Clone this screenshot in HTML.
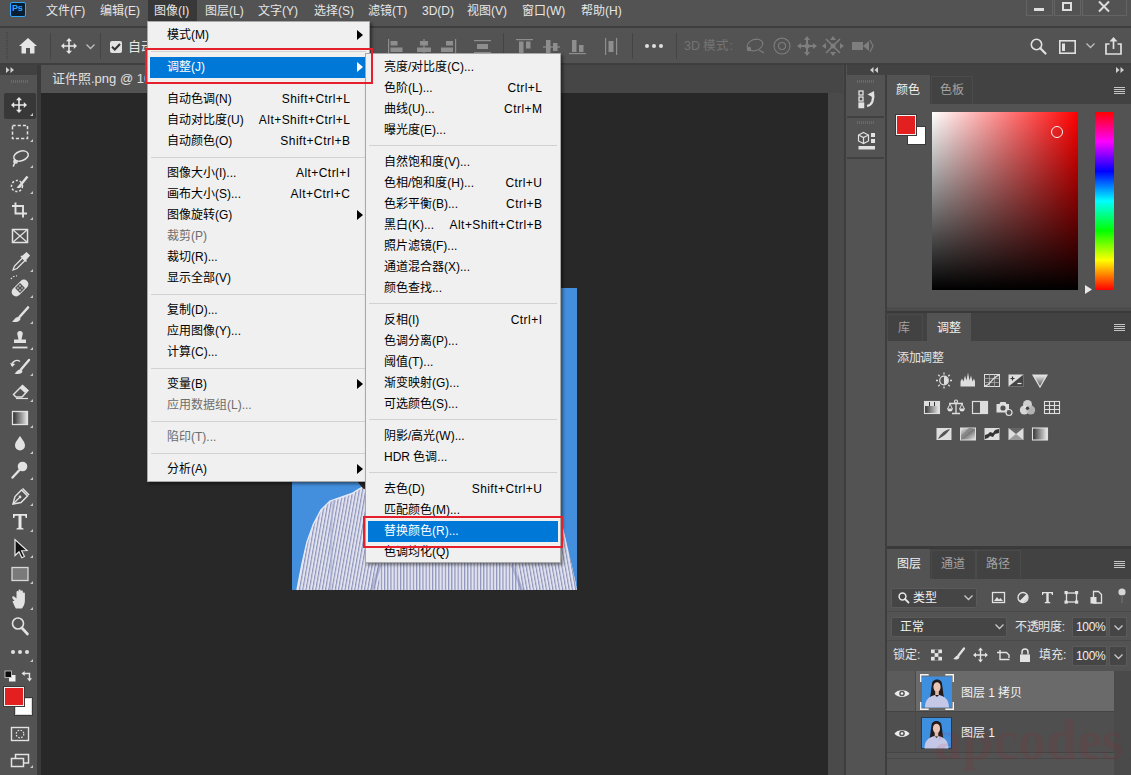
<!DOCTYPE html>
<html lang="zh-CN">
<head>
<meta charset="utf-8">
<title>Photoshop</title>
<style>
html,body{margin:0;padding:0}
body{width:1131px;height:775px;position:relative;overflow:hidden;background:#535353;font-family:"Liberation Sans",sans-serif;font-size:12px;color:#dcdcdc;line-height:1}
.a{position:absolute}
.t{position:absolute;white-space:nowrap}
svg{position:absolute;overflow:visible}
/* menubar */
#menubar{left:0;top:0;width:1131px;height:26px;background:#535353}
.mi{position:absolute;top:0;height:22px;line-height:22px;font-size:12px;color:#e6e6e6;white-space:nowrap}
/* dropdown menus */
.menu{position:absolute;background:#f0f0f0;border:1px solid #a8a8a8;box-sizing:border-box;color:#000;box-shadow:2px 2px 3px rgba(0,0,0,.45)}
.menu .it{position:absolute;left:2px;right:2px;height:21px;line-height:21px;font-size:12px;white-space:nowrap}
.menu .it .l{position:absolute;left:16px;top:0}
.menu .it .r{position:absolute;right:16px;top:0;letter-spacing:0.45px;margin-right:-0.45px}
.menu .it.dis{color:#6d6d6d}
.menu .it.hl{background:#0078d7;color:#fff}
.menu .sep{position:absolute;left:3px;right:3px;height:1px;background:#d2d2d2}
.menu .arr{position:absolute;right:4px;top:5px;width:0;height:0;border-left:6px solid #000;border-top:5.5px solid transparent;border-bottom:5.5px solid transparent}
.menu .hl .arr{border-left-color:#fff}
.redbox{position:absolute;border:2px solid #e3202c;box-sizing:border-box}
</style>
</head>
<body>
<!-- ===== BACKGROUND STRUCTURE ===== -->
<div class="a" id="menubar"></div>
<div class="a" style="left:0;top:26px;width:1131px;height:2px;background:#3e3e3e"></div>
<div class="a" id="optbar" style="left:0;top:28px;width:1131px;height:35px;background:#535353"></div>
<div class="a" style="left:0;top:63px;width:1131px;height:2px;background:#3e3e3e"></div>
<!-- left toolbar -->
<div class="a" id="toolbar" style="left:0;top:65px;width:37px;height:710px;background:#535353"></div>
<div class="a" style="left:0;top:65px;width:37px;height:10px;background:#414141"></div>
<div class="a" style="left:37px;top:65px;width:4px;height:710px;background:#3a3a3a"></div>
<!-- document area -->
<div class="a" id="tabbar" style="left:41px;top:65px;width:802px;height:28px;background:#464646"></div>
<div class="a" id="canvas" style="left:41px;top:93px;width:787px;height:682px;background:#282828"></div>
<div class="a" style="left:828px;top:93px;width:15px;height:682px;background:#4a4a4a"></div>
<div class="a" style="left:843px;top:65px;width:1px;height:710px;background:#4a4a4a"></div><div class="a" style="left:844px;top:65px;width:2.500px;height:710px;background:#3d3d3d"></div>
<!-- right dock -->
<div class="a" id="dock" style="left:846px;top:65px;width:284px;height:710px;background:#535353"></div>

<!-- ===== PHOTO ===== -->
<svg style="left:292px;top:288px" width="285" height="302" viewBox="292 288 285 302">
 <defs>
  <pattern id="stripe" width="3.2" height="10" patternUnits="userSpaceOnUse" patternTransform="rotate(10)">
   <rect width="3.2" height="10" fill="#e2e3ee"/><rect width="1.15" height="10" fill="#8c93bb"/>
  </pattern>
  <pattern id="stripe2" width="3.2" height="10" patternUnits="userSpaceOnUse" patternTransform="rotate(-10)">
   <rect width="3.2" height="10" fill="#e2e3ee"/><rect width="1.15" height="10" fill="#8c93bb"/>
  </pattern>
  <pattern id="stripe3" width="3.2" height="10" patternUnits="userSpaceOnUse">
   <rect width="3.2" height="10" fill="#e2e3ee"/><rect width="1.15" height="10" fill="#8c93bb"/>
  </pattern>
 </defs>
 <rect x="292" y="288" width="285" height="302" fill="#448fdd"/>
 <path d="M297 590 L302 564 L307 542 L313.500 524 L321 510 L330 501 L342 497 L352 493.500 L359 489 L364 486.500 L372 476 L400 470 L520 470 L548 505 L563 528 L567 545 L571 562 L575 580 L577 590 Z" fill="url(#stripe3)"/>
 <path d="M297 590 L302 564 L307 542 L313.500 524 L321 510 L330 501 L342 497 L352 493.500 L359 489 L364 486.500 L372 476 L380 590 Z" fill="url(#stripe)"/>
 <path d="M505 470 L520 470 L548 505 L563 528 L567 545 L571 562 L575 580 L577 590 L520 590 Z" fill="url(#stripe2)"/>
 <path d="M297 590 L302 564 L307 542 L313.500 524 L321 510 L330 501 L342 497 L352 493.500 L359 489 L364 486.500" stroke="#e6eaf8" stroke-width="1.400" fill="none"/>
 <path d="M334 500 C328 530 334 560 330 590" stroke="#a9afd4" stroke-width="2" fill="none" opacity="0.600"/>
 <path d="M512 565 L522 590 M380 565 L372 590" stroke="#8088b6" stroke-width="3" fill="none" opacity="0.450"/>
 <path d="M357 481 L368 481 L368 490 L363 488.500 Z" fill="#2a2320"/>
</svg>

<!-- ===== MENU BAR ===== -->
<div class="a" style="left:10px;top:2px;width:16px;height:15px;background:#0a1e33;border:1px solid #31a8ff;box-sizing:border-box;border-radius:2px"></div>
<div class="t" style="left:12px;top:4px;font-size:9px;font-weight:bold;color:#31a8ff;letter-spacing:-0.3px">Ps</div>
<div class="a" style="left:148px;top:0;width:49px;height:22px;background:#383838"></div>
<div class="a" id="menubar2" style="left:0;top:0;width:700px;height:22px">
<span class="mi" style="left:46px">文件(F)</span>
<span class="mi" style="left:100px">编辑(E)</span>
<span class="mi" style="left:154px">图像(I)</span>
<span class="mi" style="left:205px">图层(L)</span>
<span class="mi" style="left:258px">文字(Y)</span>
<span class="mi" style="left:314px">选择(S)</span>
<span class="mi" style="left:368px">滤镜(T)</span>
<span class="mi" style="left:422px">3D(D)</span>
<span class="mi" style="left:467px">视图(V)</span>
<span class="mi" style="left:522px">窗口(W)</span>
<span class="mi" style="left:581px">帮助(H)</span>
</div>
<!-- window controls -->
<div class="a" style="left:1026px;top:-1px;width:27px;height:17px;border:1px solid #646464;box-sizing:border-box"></div>
<div class="a" style="left:1054px;top:-1px;width:27px;height:17px;border:1px solid #646464;box-sizing:border-box"></div>
<div class="a" style="left:1082px;top:-1px;width:45px;height:17px;border:1px solid #646464;box-sizing:border-box"></div>
<div class="a" style="left:1034px;top:8px;width:10px;height:3px;background:#dedede"></div>
<div class="a" style="left:1062px;top:2px;width:10px;height:9px;border:2px solid #dedede;box-sizing:border-box"></div>
<svg style="left:1098px;top:1px" width="12" height="11" viewBox="0 0 12 11"><path d="M1 0.5 L11 10.5 M11 0.5 L1 10.5" stroke="#dedede" stroke-width="2" fill="none"/></svg>

<!-- ===== OPTIONS BAR ===== -->
<div class="a" style="left:6px;top:32px;width:2px;height:27px;background:repeating-linear-gradient(180deg,#474747 0 1px,transparent 1px 2px)"></div>
<!-- home -->
<svg style="left:19px;top:38px" width="18" height="16" viewBox="0 0 18 16"><path d="M9 0 L0 8 L2.5 8 L2.5 15.5 L7 15.5 L7 10 L11 10 L11 15.5 L15.5 15.5 L15.5 8 L18 8 Z" fill="#e6e6e6"/></svg>
<div class="a" style="left:50px;top:33px;width:1px;height:26px;background:#444"></div>
<!-- move tool -->
<svg style="left:61px;top:38px" width="16" height="16" viewBox="0 0 16 16"><path d="M8 0 L11 3.2 L8.8 3.2 L8.8 7.2 L12.8 7.2 L12.8 5 L16 8 L12.8 11 L12.8 8.8 L8.8 8.8 L8.8 12.8 L11 12.8 L8 16 L5 12.8 L7.2 12.8 L7.2 8.8 L3.2 8.8 L3.2 11 L0 8 L3.2 5 L3.2 7.2 L7.2 7.2 L7.2 3.2 L5 3.2 Z" fill="#e6e6e6"/></svg>
<svg style="left:86px;top:44px" width="9" height="6" viewBox="0 0 9 6"><path d="M0.5 0.5 L4.5 4.5 L8.5 0.5" stroke="#bdbdbd" stroke-width="1.3" fill="none"/></svg>
<div class="a" style="left:100px;top:33px;width:1px;height:26px;background:#444"></div>
<!-- checkbox -->
<div class="a" style="left:110px;top:41px;width:12px;height:12px;background:#e2e2e2;border-radius:2px"></div>
<svg style="left:111px;top:43px" width="10" height="8" viewBox="0 0 10 8"><path d="M1 3.8 L3.8 6.5 L9 1" stroke="#333" stroke-width="2" fill="none"/></svg>
<div class="t" style="left:128px;top:40px;font-size:13px;color:#e6e6e6">自动选择:</div>
<!-- align icons (dim) -->
<svg style="left:388px;top:38px" width="250" height="18" viewBox="0 0 250 18" fill="#8e8e8e">
 <!-- align left -->
 <rect x="0" y="1" width="1.2" height="15"/><rect x="2.5" y="3" width="7" height="4.5"/><rect x="2.5" y="9.5" width="12" height="4.5"/>
 <!-- align center h -->
 <rect x="35.4" y="1" width="1.2" height="15"/><rect x="32" y="3" width="8" height="4.5"/><rect x="29" y="9.500" width="14" height="4.5"/>
 <!-- align right -->
 <rect x="67" y="1" width="1.2" height="15"/><rect x="58" y="3" width="7" height="4.5"/><rect x="53" y="9.5" width="12" height="4.5"/>
 <!-- distribute -->
 <rect x="86" y="2" width="17" height="1.2"/><rect x="86" y="14" width="17" height="1.2"/><rect x="89" y="6" width="11" height="5"/>
 <!-- sep -->
 <rect x="115" y="-5" width="1" height="26" fill="#444"/>
 <!-- align top -->
 <rect x="128" y="1" width="17" height="1.2"/><rect x="131" y="3.5" width="4.5" height="12"/><rect x="138" y="3.5" width="4.500" height="7"/>
 <!-- align middle -->
 <rect x="155" y="8.4" width="17" height="1.2"/><rect x="158" y="2" width="4.5" height="14"/><rect x="165" y="5" width="4.5" height="8"/>
 <!-- align bottom -->
 <rect x="181" y="15" width="17" height="1.2"/><rect x="184" y="2" width="4.5" height="12"/><rect x="191" y="7" width="4.5" height="7"/>
 <!-- distribute v -->
 <rect x="217" y="0" width="1.2" height="17"/><rect x="228" y="0" width="1.2" height="17"/><rect x="220.500" y="3" width="5" height="11"/>
 <rect x="244" y="-5" width="1" height="26" fill="#444"/>
</svg>
<div class="a" style="left:645px;top:44px;width:4px;height:4px;border-radius:2px;background:#e0e0e0"></div>
<div class="a" style="left:652px;top:44px;width:4px;height:4px;border-radius:2px;background:#e0e0e0"></div>
<div class="a" style="left:659px;top:44px;width:4px;height:4px;border-radius:2px;background:#e0e0e0"></div>
<div class="a" style="left:676px;top:33px;width:1px;height:26px;background:#444"></div>
<div class="t" style="left:684px;top:40px;font-size:12.500px;color:#747474">3D 模式:</div>
<!-- 3D icons dim -->
<svg style="left:744px;top:36px" width="130" height="20" viewBox="0 0 130 20" fill="none" stroke="#7e7e7e" stroke-width="1.1">
 <ellipse cx="11" cy="9" rx="8" ry="5.5" transform="rotate(-20 11 9)"/><circle cx="5" cy="13" r="2.2" fill="#7e7e7e" stroke="none"/><path d="M15 14 l5 3"/>
 <circle cx="38" cy="10" r="8"/><circle cx="38" cy="10" r="3.5"/><path d="M33 4 a8 8 0 0 1 10 0"/>
 <path d="M63 1 L63 19 M54 10 L72 10" stroke-width="2"/><path d="M63 0 l-3 4 h6 z M63 20 l-3 -4 h6 z M53 10 l4 -3 v6 z M73 10 l-4 -3 v6 z" fill="#7e7e7e" stroke="none"/><circle cx="63" cy="10" r="2.500" fill="#7e7e7e" stroke="none"/>
 <path d="M82 3 L96 17 M96 3 L82 17" stroke-width="1.6"/><path d="M89 0 l-3 4 h6 z M89 20 l-3 -4 h6 z M78 10 l4 -3 v6 z M100 10 l-4 -3 v6 z" fill="#7e7e7e" stroke="none"/><circle cx="89" cy="10" r="2.5" fill="#7e7e7e" stroke="none"/>
 <rect x="108" y="6" width="11" height="8" fill="#7e7e7e" stroke="none"/><path d="M119 10 l6 -5 v10 z" fill="#7e7e7e" stroke="none"/><path d="M126 4 l3 6 l-3 6" />
</svg>
<!-- search -->
<svg style="left:1030px;top:38px" width="17" height="17" viewBox="0 0 17 17"><circle cx="6.5" cy="6.5" r="5.2" stroke="#e0e0e0" stroke-width="1.6" fill="none"/><path d="M10.300 10.300 L15.500 15.500" stroke="#e0e0e0" stroke-width="2.2" stroke-linecap="round"/></svg>
<!-- workspace -->
<svg style="left:1059px;top:40px" width="17" height="14" viewBox="0 0 17 14"><rect x="0.8" y="0.8" width="15.4" height="12.4" stroke="#e0e0e0" stroke-width="1.6" fill="none"/><rect x="3" y="3.500" width="3" height="7.500" fill="#e0e0e0"/></svg>
<svg style="left:1086px;top:43px" width="9" height="6" viewBox="0 0 9 6"><path d="M0.5 0.5 L4.5 4.5 L8.5 0.5" stroke="#bdbdbd" stroke-width="1.3" fill="none"/></svg>
<!-- share -->
<svg style="left:1105px;top:37px" width="17" height="18" viewBox="0 0 17 18"><path d="M4.5 7 L1 7 L1 17 L16 17 L16 7 L12.500 7" stroke="#e0e0e0" stroke-width="1.7" fill="none"/><path d="M8.5 12 L8.5 3" stroke="#e0e0e0" stroke-width="1.7"/><path d="M8.5 0 L4.5 4.500 L12.5 4.500 Z" fill="#e0e0e0"/></svg>

<!-- ===== DOC TAB ===== -->
<div class="a" style="left:41px;top:65px;width:330px;height:28px;background:#535353"></div>
<div class="t" style="left:52px;top:72px;font-size:13px;color:#e0e0e0">证件照.png @ 100%(图层 1 拷贝, RGB/8#) *</div>
<svg style="left:6px;top:67px" width="9" height="6" viewBox="0 0 9 6"><path d="M0 0 L3.5 3 L0 6 Z M4.500 0 L8 3 L4.5 6 Z" fill="#cfcfcf"/></svg>

<div class="a" style="left:11px;top:80px;width:17px;height:3px;background:repeating-linear-gradient(90deg,#6a6a6a 0 1px,transparent 1px 2px)"></div>

<div class="menu" id="m1" style="left:147px;top:21px;width:223px;height:461px">
<div class="it" style="top:3px"><span class="l" style="left:17px">模式(M)</span><span class="arr"></span></div>
<div class="sep" style="top:28.5px"></div>
<div class="it hl" style="top:35px"><span class="l" style="left:17px">调整(J)</span><span class="arr"></span></div>
<div class="sep" style="top:60.5px"></div>
<div class="it" style="top:67px"><span class="l" style="left:17px">自动色调(N)</span><span class="r" style="right:17px">Shift+Ctrl+L</span></div>
<div class="it" style="top:88px"><span class="l" style="left:17px">自动对比度(U)</span><span class="r" style="right:17px">Alt+Shift+Ctrl+L</span></div>
<div class="it" style="top:109px"><span class="l" style="left:17px">自动颜色(O)</span><span class="r" style="right:17px">Shift+Ctrl+B</span></div>
<div class="sep" style="top:134.5px"></div>
<div class="it" style="top:141px"><span class="l" style="left:17px">图像大小(I)...</span><span class="r" style="right:17px">Alt+Ctrl+I</span></div>
<div class="it" style="top:162px"><span class="l" style="left:17px">画布大小(S)...</span><span class="r" style="right:17px">Alt+Ctrl+C</span></div>
<div class="it" style="top:183px"><span class="l" style="left:17px">图像旋转(G)</span><span class="arr"></span></div>
<div class="it dis" style="top:204px"><span class="l" style="left:17px">裁剪(P)</span></div>
<div class="it" style="top:225px"><span class="l" style="left:17px">裁切(R)...</span></div>
<div class="it" style="top:246px"><span class="l" style="left:17px">显示全部(V)</span></div>
<div class="sep" style="top:271.5px"></div>
<div class="it" style="top:278px"><span class="l" style="left:17px">复制(D)...</span></div>
<div class="it" style="top:299px"><span class="l" style="left:17px">应用图像(Y)...</span></div>
<div class="it" style="top:320px"><span class="l" style="left:17px">计算(C)...</span></div>
<div class="sep" style="top:345.5px"></div>
<div class="it" style="top:352px"><span class="l" style="left:17px">变量(B)</span><span class="arr"></span></div>
<div class="it dis" style="top:373px"><span class="l" style="left:17px">应用数据组(L)...</span></div>
<div class="sep" style="top:398.5px"></div>
<div class="it dis" style="top:405px"><span class="l" style="left:17px">陷印(T)...</span></div>
<div class="sep" style="top:430.5px"></div>
<div class="it" style="top:437px"><span class="l" style="left:17px">分析(A)</span><span class="arr"></span></div>
</div>
<div class="menu" id="m2" style="left:365px;top:53px;width:196px;height:510px">
<div class="it" style="top:2.5px"><span class="l" style="left:16px">亮度/对比度(C)...</span></div>
<div class="it" style="top:23.5px"><span class="l" style="left:16px">色阶(L)...</span><span class="r" style="right:16px">Ctrl+L</span></div>
<div class="it" style="top:44.5px"><span class="l" style="left:16px">曲线(U)...</span><span class="r" style="right:16px">Ctrl+M</span></div>
<div class="it" style="top:65.5px"><span class="l" style="left:16px">曝光度(E)...</span></div>
<div class="sep" style="top:91px"></div>
<div class="it" style="top:97.5px"><span class="l" style="left:16px">自然饱和度(V)...</span></div>
<div class="it" style="top:118.5px"><span class="l" style="left:16px">色相/饱和度(H)...</span><span class="r" style="right:16px">Ctrl+U</span></div>
<div class="it" style="top:139.5px"><span class="l" style="left:16px">色彩平衡(B)...</span><span class="r" style="right:16px">Ctrl+B</span></div>
<div class="it" style="top:160.5px"><span class="l" style="left:16px">黑白(K)...</span><span class="r" style="right:16px">Alt+Shift+Ctrl+B</span></div>
<div class="it" style="top:181.5px"><span class="l" style="left:16px">照片滤镜(F)...</span></div>
<div class="it" style="top:202.5px"><span class="l" style="left:16px">通道混合器(X)...</span></div>
<div class="it" style="top:223.5px"><span class="l" style="left:16px">颜色查找...</span></div>
<div class="sep" style="top:249px"></div>
<div class="it" style="top:255.5px"><span class="l" style="left:16px">反相(I)</span><span class="r" style="right:16px">Ctrl+I</span></div>
<div class="it" style="top:276.5px"><span class="l" style="left:16px">色调分离(P)...</span></div>
<div class="it" style="top:297.5px"><span class="l" style="left:16px">阈值(T)...</span></div>
<div class="it" style="top:318.5px"><span class="l" style="left:16px">渐变映射(G)...</span></div>
<div class="it" style="top:339.5px"><span class="l" style="left:16px">可选颜色(S)...</span></div>
<div class="sep" style="top:365px"></div>
<div class="it" style="top:371.5px"><span class="l" style="left:16px">阴影/高光(W)...</span></div>
<div class="it" style="top:392.5px"><span class="l" style="left:16px">HDR 色调...</span></div>
<div class="sep" style="top:418px"></div>
<div class="it" style="top:424.5px"><span class="l" style="left:16px">去色(D)</span><span class="r" style="right:16px">Shift+Ctrl+U</span></div>
<div class="it" style="top:445.5px"><span class="l" style="left:16px">匹配颜色(M)...</span></div>
<div class="it hl" style="top:466.5px"><span class="l" style="left:16px">替换颜色(R)...</span></div>
<div class="it" style="top:487.5px"><span class="l" style="left:16px">色调均化(Q)</span></div>
</div>
<div class="redbox" style="left:144.500px;top:48px;width:228px;height:36px"></div>
<div class="redbox" style="left:363px;top:516px;width:200px;height:32px"></div>

<!-- ===== LEFT TOOLBAR ICONS ===== -->
<div class="a" style="left:4px;top:93px;width:32px;height:26px;background:#383838;border-radius:2px"></div>
<svg style="left:0;top:0" width="41" height="775" viewBox="0 0 41 775" fill="none" stroke="#e2e2e2" stroke-width="1.5">
 <!-- corner triangles -->
 <g fill="#c8c8c8" stroke="none">
  <path d="M33 113 v3 h-3z M33 139 v3 h-3z M33 165 v3 h-3z M33 191 v3 h-3z M33 217 v3 h-3z M33 269 v3 h-3z M33 295 v3 h-3z M33 321 v3 h-3z M33 347 v3 h-3z M33 373 v3 h-3z M33 399 v3 h-3z M33 425 v3 h-3z M33 451 v3 h-3z M33 477 v3 h-3z M33 503 v3 h-3z M33 529 v3 h-3z M33 555 v3 h-3z M33 581 v3 h-3z M33 607 v3 h-3z M33 659 v3 h-3z M33 765 v3 h-3z"/>
 </g>
 <!-- 1 move (c 19,105) -->
 <path d="M19 97 l3 3.200 h-2.200 v4 h4 v-2.200 l3.200 3 l-3.200 3 v-2.200 h-4 v4 h2.200 l-3 3.200 l-3 -3.200 h2.200 v-4 h-4 v2.200 l-3.200 -3 l3.200 -3 v2.200 h4 v-4 h-2.200 z" fill="#e8e8e8" stroke="none"/>
 <!-- 2 marquee -->
 <rect x="12.500" y="125.500" width="15" height="13" stroke-dasharray="3.200 2"/>
 <!-- 3 lasso -->
 <ellipse cx="21" cy="156" rx="7.500" ry="4.800" transform="rotate(-18 21 156)"/><path d="M15.500 159.500 c-2.500 1 -2 4 0.500 3.500 c2 -0.500 1 -3 -0.500 -2 c-1.500 1.500 -1 4 -2.500 5.500"/>
 <!-- 4 quick select -->
 <circle cx="17" cy="186" r="5.500" stroke-dasharray="2.200 1.800"/><path d="M27.500 176.500 l-6.500 8" stroke-width="2.400"/><path d="M21.500 183.500 c-2.500 0 -3 3 -5 4 c3 1.500 6.500 -0.500 5 -4z" fill="#e2e2e2" stroke="none"/>
 <!-- 5 crop -->
 <path d="M15.500 202.500 v11 h11.500 M12 206 h11 v11.500" stroke-width="1.900"/>
 <!-- 6 frame -->
 <rect x="12.500" y="229.500" width="15" height="13"/><path d="M12.500 229.500 l15 13 M27.500 229.500 l-15 13" stroke-width="1.200"/>
 <!-- 7 eyedropper -->
 <path d="M13 270 l1.500 -4 l8 -8 l2.500 2.500 l-8 8 z" stroke-width="1.300"/><path d="M22.500 256.500 l4 -3.500 l2.500 2.500 l-3.500 4 z M21 256 l5.500 5.500" fill="#e2e2e2" stroke-width="1.600"/>
 <!-- 8 healing brush (band-aid) -->
 <g transform="rotate(-45 20 288)"><rect x="10" y="283.500" width="20" height="9" rx="4.500" fill="#e2e2e2" stroke="none"/><rect x="16.500" y="284.500" width="7" height="7" fill="#535353" stroke="none"/><circle cx="18.500" cy="286.500" r="0.800" fill="#e2e2e2" stroke="none"/><circle cx="21.500" cy="286.500" r="0.800" fill="#e2e2e2" stroke="none"/><circle cx="18.500" cy="289.500" r="0.800" fill="#e2e2e2" stroke="none"/><circle cx="21.500" cy="289.500" r="0.800" fill="#e2e2e2" stroke="none"/></g>
 <path d="M11 279 a6 6 0 0 1 6 -3" stroke-dasharray="1.500 1.500" stroke-width="1.200"/>
 <!-- 9 brush -->
 <g transform="translate(0,2.500)"><path d="M28 305 l-8.500 9.500" stroke-width="2.600" stroke-linecap="round"/><path d="M18.500 314.500 c-3 -0.500 -4 3 -6.500 4.500 c4 1.500 8.500 0 8.500 -3z" fill="#e2e2e2" stroke="none"/></g>
 <!-- 10 stamp -->
 <g transform="translate(0,2)"><path d="M17.500 333 a2.800 2.800 0 1 1 5 0 l-1 4.500 h4.500 v3.500 h-12 v-3.500 h4.500 z" fill="#e2e2e2" stroke="none"/><path d="M12.500 345.500 h15" stroke-width="1.800"/></g>
 <!-- 11 history brush -->
 <g transform="translate(0,3)"><path d="M29 357 l-8 9.500" stroke-width="2.400" stroke-linecap="round"/><path d="M20.500 366.500 c-3 -0.500 -4 3 -6 4 c4 1.500 8 0 8 -2.500z" fill="#e2e2e2" stroke="none"/><path d="M12 363 a5 5 0 0 1 8 -4.500" stroke-width="1.400"/><path d="M10 360 l2.200 4 l3 -3z" fill="#e2e2e2" stroke="none"/></g>
 <!-- 12 eraser -->
 <path d="M13.500 394.500 l9 -9 l5.500 5 l-6 6.500 h-6 z" stroke-width="1.400"/><path d="M19.500 388 l5.500 5 l3 -3 l-5.500 -5z" fill="#e2e2e2" stroke="none"/><path d="M16 398.500 h12" stroke-width="1.200"/>
 <!-- 13 gradient -->
 <defs><linearGradient id="tg" x1="0" x2="1" y1="0" y2="0"><stop offset="0" stop-color="#2a2a2a"/><stop offset="1" stop-color="#e8e8e8"/></linearGradient></defs>
 <rect x="12.500" y="411.500" width="15" height="13" fill="url(#tg)" stroke-width="1.300"/>
 <!-- 14 blur drop -->
 <path d="M20 436 c3 4.500 5 6.500 5 9.500 a5 5 0 0 1 -10 0 c0 -3 2 -5 5 -9.500z" fill="#e2e2e2" stroke="none"/>
 <!-- 15 dodge -->
 <circle cx="22.500" cy="466.500" r="4.800" fill="#e2e2e2" stroke="none"/><path d="M19 470.500 l-6.500 7" stroke-width="2.400" stroke-linecap="round"/>
 <!-- 16 pen -->
 <path d="M13 504 l2 -7.500 l6.500 -6.500 l6 6 l-6.500 6.500 z" stroke-width="1.400"/><path d="M13 504 l6 -6" stroke-width="1.200"/><circle cx="20" cy="497" r="1.400" fill="#e2e2e2" stroke="none"/><path d="M22.500 488.500 l6.500 6.500" stroke-width="1.600"/>
 <!-- 17 type -->
 <path d="M13 514 h14 v4 h-1.200 l-0.800 -2.200 h-3.500 v12 l2 0.700 v1 h-7 v-1 l2 -0.700 v-12 h-3.500 l-0.800 2.200 h-1.200z" fill="#e8e8e8" stroke="none"/>
 <!-- 18 path select arrow -->
 <path d="M15 539.500 l0 16 l4 -3.800 l2.800 6 l2.600 -1.200 l-2.800 -5.800 l5.400 -0.200 z" fill="#111" stroke="#e8e8e8" stroke-width="1.200"/>
 <!-- 19 rectangle -->
 <rect x="12" y="567.500" width="16" height="13" fill="#7a7a7a" stroke="#d8d8d8" stroke-width="1.300"/>
 <!-- 20 hand -->
 <path d="M14.500 601 c-1.500 -2 -3 -3.500 -2 -4.500 c1 -1 2.500 0.500 4 2 l0 -6.500 c0 -1.500 2 -1.500 2 0 l0 -1.500 c0 -1.500 2.200 -1.500 2.200 0 l0 1 c0 -1.500 2.200 -1.500 2.200 0 l0 2 c0 -1.500 2 -1.500 2 0 l0 7 c0 3.500 -1.500 6.500 -3 8 l-6 0 c-1.200 -2 -2.400 -4.500 -3.400 -7.500z" fill="#e2e2e2" stroke="none"/>
 <!-- 21 zoom -->
 <circle cx="18" cy="623.500" r="5.500" stroke-width="1.600"/><path d="M22 628 l5.500 6" stroke-width="2.600" stroke-linecap="round"/>
 <!-- 22 dots -->
 <circle cx="13" cy="652" r="2" fill="#e2e2e2" stroke="none"/><circle cx="20" cy="652" r="2" fill="#e2e2e2" stroke="none"/><circle cx="27" cy="652" r="2" fill="#e2e2e2" stroke="none"/>
 <!-- default colors / swap -->
 <rect x="9" y="675" width="6.500" height="6.500" fill="#f0f0f0" stroke="none"/><rect x="5" y="671" width="6.500" height="6.500" fill="#0a0a0a" stroke="#d0d0d0" stroke-width="0.800"/>
 <path d="M24 673.500 h5.500 v5.500" stroke-width="1.400"/><path d="M21.500 673.500 l3.200 -2.600 v5.200z M29.500 681.500 l-2.600 -3.200 h5.200z" fill="#e2e2e2" stroke="none"/>
 <!-- quick mask -->
 <rect x="11.500" y="727.500" width="17" height="13" stroke-width="1.400"/><circle cx="20" cy="734" r="3.800" stroke-dasharray="1.600 1.400" stroke-width="1.200"/>
 <!-- screen mode -->
 <rect x="15.500" y="754.500" width="13" height="8.500" stroke-width="1.500"/><rect x="11.500" y="758.500" width="12" height="8" fill="#535353" stroke-width="1.500"/>
</svg>
<!-- fg/bg swatches -->
<div class="a" style="left:14px;top:697px;width:19px;height:19px;background:#fff;border:1px solid #3a3a3a;box-sizing:border-box;box-shadow:0 0 0 1px #d8d8d8 inset"></div>
<div class="a" style="left:4px;top:687px;width:20px;height:19px;background:#e3201f;border:1px solid #f0f0f0;box-sizing:border-box;box-shadow:0 0 0 1px #3a3a3a"></div>

<!-- ===== RIGHT DOCK ===== -->
<div class="a" style="left:847px;top:65px;width:284px;height:10px;background:#424242"></div>
<svg style="left:870px;top:67px" width="9" height="6" viewBox="0 0 9 6"><path d="M3.500 0 L0 3 L3.500 6 Z M8 0 L4.500 3 L8 6 Z" fill="#d0d0d0"/></svg>
<svg style="left:1116px;top:67px" width="9" height="6" viewBox="0 0 9 6"><path d="M0 0 L3.500 3 L0 6 Z M4.500 0 L8 3 L4.500 6 Z" fill="#d0d0d0"/></svg>
<!-- icon column -->
<div class="a" style="left:884.500px;top:75px;width:2.500px;height:700px;background:#3e3e3e"></div>
<div class="a" style="left:847px;top:116px;width:37px;height:2px;background:#414141"></div>
<div class="a" style="left:847px;top:157px;width:37px;height:2px;background:#414141"></div>
<div class="a" style="left:857px;top:80px;width:17px;height:3px;background:repeating-linear-gradient(90deg,#6a6a6a 0 1px,transparent 1px 2px)"></div>
<div class="a" style="left:857px;top:121px;width:17px;height:3px;background:repeating-linear-gradient(90deg,#6a6a6a 0 1px,transparent 1px 2px)"></div>
<!-- history icon -->
<svg style="left:858px;top:90px" width="18" height="20" viewBox="0 0 18 20" fill="none" stroke="#e2e2e2" stroke-width="1.300">
 <rect x="1" y="1" width="4" height="4"/><rect x="1" y="7" width="4" height="4"/><rect x="1" y="13" width="4.600" height="4.600" fill="#e2e2e2"/>
 <path d="M9 16 c5 -1 7 -6 5.500 -11.500" stroke-width="2.200"/><path d="M9.500 4.500 l6.500 -3.500 l0.500 7z" fill="#e2e2e2" stroke="none"/>
</svg>
<!-- properties / 3D icon -->
<svg style="left:857px;top:131px" width="20" height="20" viewBox="0 0 20 20" fill="none" stroke="#e2e2e2" stroke-width="1.200">
 <path d="M6.500 1.500 l5 2.500 v6 l-5 2.500 l-5 -2.500 v-6z M1.500 4 l5 2.500 l5 -2.500 M6.500 6.500 v6"/>
 <rect x="14" y="2" width="4" height="4" fill="#e2e2e2" stroke="none"/><rect x="14" y="8" width="4" height="4" fill="#e2e2e2" stroke="none"/>
 <rect x="1.500" y="15" width="16.500" height="3.500" fill="#e2e2e2" stroke="none"/>
</svg>

<!-- ===== COLOR PANEL ===== -->
<div class="a" style="left:887px;top:75px;width:244px;height:29px;background:#424242"></div>
<div class="a" style="left:887px;top:75px;width:43px;height:30px;background:#535353"></div>
<div class="a" style="left:931px;top:76px;width:42px;height:28px;border:1px solid #4b4b4b;border-bottom:none;box-sizing:border-box"></div>
<div class="t" style="left:896px;top:84px;font-size:12px;color:#f0f0f0">颜色</div>
<div class="t" style="left:940px;top:84px;font-size:12px;color:#a2a2a2">色板</div>
<div class="a" style="left:1114px;top:87px;width:11px;height:7px;background:repeating-linear-gradient(180deg,#c4c4c4 0 1px,transparent 1px 2px)"></div>
<!-- swatches -->
<div class="a" style="left:907px;top:126px;width:19px;height:19px;background:#fff;border:1px solid #3a3a3a;box-sizing:border-box"></div>
<div class="a" style="left:896px;top:115px;width:20px;height:20px;background:#e3201f;border:1px solid #f2f2f2;box-sizing:border-box;box-shadow:0 0 0 1px #3a3a3a"></div>
<!-- color field -->
<div class="a" style="left:932px;top:112px;width:146px;height:178px;background:linear-gradient(180deg,rgba(0,0,0,0) 0%,#000 100%),linear-gradient(90deg,#fff 0%,#ff0000 100%)"></div>
<div class="a" style="left:1051px;top:126px;width:12px;height:12px;border:1.200px solid #f4f4f4;border-radius:50%;box-sizing:border-box"></div>
<!-- hue strip -->
<div class="a" style="left:1095px;top:112px;width:19px;height:178px;background:linear-gradient(180deg,#ff0000 0%,#ff00ff 16.600%,#0000ff 33.300%,#00ffff 50%,#00ff00 66.600%,#ffff00 83.300%,#ff0000 100%)"></div>
<svg style="left:1085px;top:285px" width="7" height="9" viewBox="0 0 7 9"><path d="M0 0 L7 4.500 L0 9 Z" fill="#e8e8e8"/></svg>
<!-- divider -->
<div class="a" style="left:887px;top:307px;width:244px;height:4px;background:#4c4c4c"></div>
<div class="a" style="left:887px;top:311px;width:244px;height:2px;background:#3a3a3a"></div>

<!-- ===== ADJUSTMENTS PANEL ===== -->
<div class="a" style="left:887px;top:313px;width:244px;height:28px;background:#424242"></div>
<div class="a" style="left:927px;top:313px;width:44px;height:29px;background:#535353"></div>
<div class="a" style="left:887px;top:314px;width:36px;height:27px;border:1px solid #4b4b4b;border-bottom:none;box-sizing:border-box"></div>
<div class="t" style="left:898px;top:322px;font-size:12px;color:#a2a2a2">库</div>
<div class="t" style="left:937px;top:322px;font-size:12px;color:#f0f0f0">调整</div>
<div class="a" style="left:1114px;top:324px;width:11px;height:7px;background:repeating-linear-gradient(180deg,#c4c4c4 0 1px,transparent 1px 2px)"></div>
<div class="t" style="left:897px;top:351.500px;font-size:12px;color:#e4e4e4;letter-spacing:-0.400px">添加调整</div>
<!-- ADJ ICONS -->
<svg style="left:887px;top:341px" width="244" height="110" viewBox="887 341 244 110" fill="none" stroke="#dedede" stroke-width="1.200">
 <defs>
  <linearGradient id="gh" x1="0" x2="1" y1="0" y2="0"><stop offset="0" stop-color="#333"/><stop offset="1" stop-color="#eee"/></linearGradient>
  <linearGradient id="gv" x1="0" x2="0" y1="0" y2="1"><stop offset="0" stop-color="#eee"/><stop offset="1" stop-color="#444"/></linearGradient>
  <linearGradient id="gd" x1="0" x2="1" y1="0" y2="1"><stop offset="0" stop-color="#eee"/><stop offset="0.500" stop-color="#777"/><stop offset="1" stop-color="#eee"/></linearGradient>
 </defs>
 <!-- row1 y=380.500 : 944,968,992,1016,1040 -->
 <circle cx="944" cy="380.500" r="4.300"/><path d="M944 376.200 a4.300 4.300 0 0 1 0 8.600z" fill="#dedede" stroke="none"/>
 <path d="M944 372.500 v2 M944 386.500 v2 M936 380.500 h2 M950 380.500 h2 M938.300 374.800 l1.400 1.400 M948.300 384.800 l1.400 1.400 M938.300 386.200 l1.400 -1.400 M948.300 376.200 l1.400 -1.400" stroke-width="1.300"/>
 <path d="M960.500 386.500 v-5 l1.500 -3 l1.500 3 l1.500 -6 l1.500 5 l1.500 -8 l1.500 8 l1.500 -5 l1.500 6 l1.500 -3 l1 3 v5 z" fill="#dedede" stroke="none"/>
 <rect x="984.500" y="374.500" width="15" height="12" stroke-width="1"/><path d="M989.500 374.500 v12 M994.500 374.500 v12 M984.500 378.500 h15 M984.500 382.500 h15" stroke-width="0.700" stroke="#b0b0b0"/><path d="M985 386 c6 -1 7 -9 14 -11" stroke-width="1.300"/>
 <rect x="1008.500" y="374.500" width="15" height="12" fill="#dedede" stroke="none"/><path d="M1023.500 374.500 v12 h-15 z" fill="#444" stroke="none"/><path d="M1010.500 378.500 h4 M1012.500 376.500 v4" stroke="#333" stroke-width="1.200"/><path d="M1017.500 383.500 h4" stroke="#eee" stroke-width="1.200"/>
 <path d="M1033 375 h14 l-7 12z" fill="url(#gv)" stroke="#dedede" stroke-width="1.200"/>
 <!-- row2 y=407.500 : 932,956,980,1003.500,1027.500,1052 -->
 <rect x="924.500" y="401.500" width="15" height="12" fill="url(#gh)" stroke-width="1.100"/><rect x="925" y="402" width="14" height="4" fill="#dedede" stroke="none"/><path d="M929.500 402 v4 M934.500 402 v4" stroke="#333" stroke-width="1"/>
 <path d="M956 401 v12 M949 403.500 h14 M952 413.500 h8" stroke-width="1.300"/><path d="M947.500 409 l2.500 -5 l2.500 5z M959.500 409 l2.500 -5 l2.500 5z" stroke-width="1"/><path d="M947.500 409 a2.500 2.500 0 0 0 5 0z M959.500 409 a2.500 2.500 0 0 0 5 0z" fill="#dedede" stroke="none"/><circle cx="956" cy="401.500" r="1.500" fill="#535353"/>
 <rect x="972.500" y="401.500" width="15" height="12"/><rect x="980" y="402" width="7" height="11" fill="#dedede" stroke="none"/>
 <path d="M996.500 404 h3 l1 -2 h5 l1 2 h2.500 v8.500 h-12.500z" fill="#dedede" stroke="none"/><circle cx="1003" cy="408" r="2.600" fill="#535353" stroke="none"/><circle cx="1009" cy="412.500" r="3" fill="#535353" stroke="#dedede" stroke-width="1.200"/>
 <circle cx="1027.500" cy="404.500" r="4.500" fill="#cfcfcf" stroke="none"/><circle cx="1024.300" cy="410" r="4.500" fill="#e4e4e4" stroke="none" opacity="0.900"/><circle cx="1030.700" cy="410" r="4.500" fill="#bdbdbd" stroke="none" opacity="0.900"/><circle cx="1027.500" cy="408.300" r="1.700" fill="#444" stroke="none"/>
 <rect x="1044.500" y="401.500" width="15" height="12" stroke-width="1.100"/><path d="M1049.500 401.500 v12 M1054.500 401.500 v12 M1044.500 405.500 h15 M1044.500 409.500 h15" stroke-width="1.100"/>
 <!-- row3 y=434 : 944,968,992,1016,1040 -->
 <rect x="936.500" y="428" width="15" height="12" fill="#dedede" stroke="none"/><path d="M938 439 c3 -1 10 -6 12 -10 c-5 1 -10 5 -12 10z" fill="#555" stroke="none"/>
 <rect x="960.500" y="428" width="15" height="12" fill="url(#gd)" stroke="#dedede" stroke-width="1"/><path d="M961 436 l8 -8 h4 l-12 12z" fill="#888" stroke="none"/>
 <rect x="984.500" y="428" width="15" height="12" fill="#dedede" stroke="none"/><path d="M985 435 l3 -1 l2 -2 l3 1 l2 -3 l4 -1 v4 l-4 1 l-2 3 l-3 -1 l-2 2 l-3 1z" fill="#333" stroke="none"/>
 <rect x="1008.500" y="428" width="15" height="12" fill="#dedede" stroke="none"/><path d="M1008.500 428 l7.500 6 l7.500 -6z" fill="#666" stroke="none"/><path d="M1008.500 440 l7.500 -6 l7.500 6z" fill="#999" stroke="none"/>
 <rect x="1032.500" y="428" width="15" height="12" fill="url(#gh)" stroke="#dedede" stroke-width="1.100"/>
</svg>
<!-- divider -->
<div class="a" style="left:887px;top:546px;width:244px;height:3px;background:#3a3a3a"></div>

<!-- ===== LAYERS PANEL ===== -->
<div class="a" style="left:887px;top:549px;width:244px;height:30px;background:#424242"></div>
<div class="a" style="left:887px;top:549px;width:43px;height:31px;background:#535353"></div>
<div class="a" style="left:931px;top:550px;width:45px;height:29px;border:1px solid #4b4b4b;border-bottom:none;box-sizing:border-box"></div>
<div class="a" style="left:976px;top:550px;width:45px;height:29px;border:1px solid #4b4b4b;border-bottom:none;box-sizing:border-box"></div>
<div class="t" style="left:897px;top:558px;font-size:12px;color:#f0f0f0">图层</div>
<div class="t" style="left:941px;top:558px;font-size:12px;color:#a2a2a2">通道</div>
<div class="t" style="left:986px;top:558px;font-size:12px;color:#a2a2a2">路径</div>
<div class="a" style="left:1114px;top:561px;width:11px;height:7px;background:repeating-linear-gradient(180deg,#c4c4c4 0 1px,transparent 1px 2px)"></div>
<!-- filter row -->
<div class="a" style="left:891px;top:588px;width:86px;height:20px;background:#454545;border:1px solid #5a5a5a;box-sizing:border-box;border-radius:2px"></div>
<svg style="left:898px;top:592px" width="12" height="12" viewBox="0 0 12 12"><circle cx="4.500" cy="4.500" r="3.400" stroke="#e6e6e6" stroke-width="1.500" fill="none"/><path d="M7 7 L10.500 10.500" stroke="#e6e6e6" stroke-width="1.800" stroke-linecap="round"/></svg>
<div class="t" style="left:913px;top:592px;font-size:12px;color:#f0f0f0">类型</div>
<svg style="left:964px;top:595px" width="9" height="6" viewBox="0 0 9 6"><path d="M0.500 0.500 L4.500 4.500 L8.500 0.500" stroke="#c8c8c8" stroke-width="1.300" fill="none"/></svg>
<svg style="left:887px;top:585px" width="244" height="26" viewBox="887 585 244 26" fill="none" stroke="#e2e2e2" stroke-width="1.300">
 <rect x="992.500" y="592.500" width="12" height="10"/><path d="M994 601 l3 -4 l2 2.500 l1.500 -1.500 l2.500 3z" fill="#e2e2e2" stroke="none"/>
 <circle cx="1023" cy="597.500" r="5"/><path d="M1019.500 601 a5 5 0 0 0 7 -7z" fill="#e2e2e2" stroke="none"/>
 <path d="M1042 592 h11 v3 h-1 l-0.700 -1.700 h-2.600 v8.500 l1.600 0.500 v0.900 h-5.600 v-0.900 l1.600 -0.500 v-8.500 h-2.600 l-0.700 1.700 h-1z" fill="#e2e2e2" stroke="none"/>
 <rect x="1066.500" y="593" width="10" height="9"/><rect x="1064.500" y="591" width="3.200" height="3.200" fill="#e2e2e2" stroke="none"/><rect x="1075" y="591" width="3.200" height="3.200" fill="#e2e2e2" stroke="none"/><rect x="1064.500" y="600.500" width="3.200" height="3.200" fill="#e2e2e2" stroke="none"/><rect x="1075" y="600.500" width="3.200" height="3.200" fill="#e2e2e2" stroke="none"/>
 <path d="M1093.500 591.500 h5 l3 3 v8.500 h-8z" /><rect x="1090.500" y="597" width="6" height="6.500" fill="#e2e2e2" stroke="none"/>
 <circle cx="1122" cy="592" r="3.600" fill="#d6d6d6" stroke="none"/><path d="M1122 595 v8" stroke="#6a6a6a" stroke-width="1.500"/>
</svg>
<div class="a" style="left:887px;top:611px;width:244px;height:1px;background:#494949"></div>
<div class="a" style="left:887px;top:640px;width:244px;height:1px;background:#494949"></div>
<!-- blend row -->
<div class="a" style="left:891px;top:617px;width:116px;height:20px;background:#454545;border:1px solid #5a5a5a;box-sizing:border-box;border-radius:2px"></div>
<div class="t" style="left:900px;top:621px;font-size:12px;color:#f0f0f0">正常</div>
<svg style="left:995px;top:624px" width="9" height="6" viewBox="0 0 9 6"><path d="M0.500 0.500 L4.500 4.500 L8.500 0.500" stroke="#c8c8c8" stroke-width="1.300" fill="none"/></svg>
<div class="t" style="left:1015px;top:621px;font-size:12px;color:#e6e6e6;letter-spacing:-0.300px">不透明度:</div>
<div class="a" style="left:1072px;top:617px;width:35px;height:20px;background:#454545;border:1px solid #5a5a5a;box-sizing:border-box"></div>
<div class="t" style="left:1076px;top:621px;font-size:12px;color:#f0f0f0;letter-spacing:-0.300px">100%</div>
<div class="a" style="left:1109px;top:617px;width:18px;height:20px;background:#454545;border:1px solid #5a5a5a;box-sizing:border-box"></div>
<svg style="left:1114px;top:625px" width="9" height="6" viewBox="0 0 9 6"><path d="M0.500 0.500 L4.500 4.500 L8.500 0.500" stroke="#c8c8c8" stroke-width="1.300" fill="none"/></svg>
<!-- lock row -->
<div class="t" style="left:893px;top:649px;font-size:12px;color:#e6e6e6">锁定:</div>
<svg style="left:887px;top:644px" width="244" height="24" viewBox="887 644 244 24" fill="none" stroke="#e2e2e2" stroke-width="1.300">
 <rect x="931" y="649.500" width="11" height="11" fill="#e2e2e2" stroke="none"/><rect x="934.700" y="649.500" width="3.600" height="3.600" fill="#535353" stroke="none"/><rect x="931" y="653.200" width="3.600" height="3.600" fill="#535353" stroke="none"/><rect x="938.400" y="653.200" width="3.600" height="3.600" fill="#535353" stroke="none"/><rect x="934.700" y="656.900" width="3.600" height="3.600" fill="#535353" stroke="none"/>
 <path d="M964 648.500 l-5.500 7" stroke-width="2.300" stroke-linecap="round"/><path d="M958 655.500 c-2.500 -0.300 -3 2.500 -4.800 3.600 c3 1.200 6.300 0 6.300 -2.400z" fill="#e2e2e2" stroke="none"/>
 <path d="M980.500 649 v12 M974.500 655 h12" stroke-width="1.400"/><path d="M980.500 647.500 l-2.500 3 h5z M980.500 662.500 l-2.500 -3 h5z M973 655 l3 -2.500 v5z M988 655 l-3 -2.500 v5z" fill="#e2e2e2" stroke="none"/>
 <path d="M1000 650 v9.500 h9.500 M997 652.500 h9.500 l2.500 2.500 v3" stroke-width="1.400"/>
 <rect x="1020" y="654.500" width="10" height="7.500" fill="#e2e2e2" stroke="none"/><path d="M1022 654.500 v-2.500 a3 3 0 0 1 6 0 v2.500" stroke-width="1.500"/>
</svg>
<div class="t" style="left:1039px;top:649px;font-size:12px;color:#e6e6e6">填充:</div>
<div class="a" style="left:1072px;top:646px;width:35px;height:20px;background:#454545;border:1px solid #5a5a5a;box-sizing:border-box"></div>
<div class="t" style="left:1076px;top:650px;font-size:12px;color:#f0f0f0;letter-spacing:-0.300px">100%</div>
<div class="a" style="left:1109px;top:646px;width:18px;height:20px;background:#454545;border:1px solid #5a5a5a;box-sizing:border-box"></div>
<svg style="left:1114px;top:654px" width="9" height="6" viewBox="0 0 9 6"><path d="M0.500 0.500 L4.500 4.500 L8.500 0.500" stroke="#c8c8c8" stroke-width="1.300" fill="none"/></svg>
<!-- layer rows -->
<div class="a" style="left:1114px;top:671px;width:17px;height:104px;background:#4a4a4a"></div>
<div class="a" style="left:887px;top:671px;width:227px;height:40px;background:#6a6a6a"></div>
<div class="a" style="left:887px;top:711px;width:227px;height:1px;background:#444"></div>
<div class="a" style="left:887px;top:712px;width:227px;height:40px;background:#4f4f4f"></div>
<div class="a" style="left:887px;top:752px;width:227px;height:1px;background:#444"></div>
<div class="a" style="left:887px;top:758px;width:244px;height:1px;background:#484848"></div>
<div class="a" style="left:887px;top:671px;width:28px;height:40px;background:#5b5b5b"></div>
<div class="a" style="left:915px;top:671px;width:1px;height:82px;background:#4a4a4a"></div>
<!-- eyes -->
<svg style="left:894px;top:688px" width="16" height="11" viewBox="0 0 16 11"><path d="M0.500 5.500 C3 1 13 1 15.500 5.500 C13 10 3 10 0.500 5.500Z" fill="#ececec"/><circle cx="8" cy="5.500" r="2.800" fill="#555"/><circle cx="8" cy="5.500" r="1.300" fill="#ececec"/></svg>
<svg style="left:894px;top:728px" width="16" height="11" viewBox="0 0 16 11"><path d="M0.500 5.500 C3 1 13 1 15.500 5.500 C13 10 3 10 0.500 5.500Z" fill="#ececec"/><circle cx="8" cy="5.500" r="2.800" fill="#555"/><circle cx="8" cy="5.500" r="1.300" fill="#ececec"/></svg>
<!-- thumbs -->
<svg style="left:920px;top:674px" width="34" height="36" viewBox="0 0 34 36">
 <rect x="2" y="2.500" width="30" height="31" fill="#3f8fe0"/>
 <path d="M12 10 c0 -6 10 -6 10 0 c1 5 1 10 2 13 l-14 0 c1 -3 1 -8 2 -13z" fill="#1f1a1c"/>
 <ellipse cx="17" cy="13" rx="3.600" ry="4.800" fill="#e9c4b4"/><rect x="15.200" y="17" width="3.600" height="4" fill="#e2b9a8"/>
 <path d="M5 33.500 c0 -9 5 -11 10 -12.500 l2 2 l2 -2 c5 1.500 10 3.500 10 12.500z" fill="#c4c8e6"/>
 <path d="M0.700 8 v-7.300 h8 M25.300 0.700 h8 v7.300 M33.300 28 v7.300 h-8 M8.700 35.300 h-8 v-7.300" fill="none" stroke="#f4f4f4" stroke-width="1.400"/>
</svg>
<svg style="left:921px;top:717px" width="32" height="33" viewBox="0 0 32 33">
 <rect x="0.500" y="0.500" width="30" height="31" fill="#3f8fe0" stroke="#2a3a4a" stroke-width="1"/>
 <path d="M10.500 8.500 c0 -6 10 -6 10 0 c1 5 1 10 2 13 l-14 0 c1 -3 1 -8 2 -13z" fill="#1f1a1c"/>
 <ellipse cx="15.500" cy="11.500" rx="3.600" ry="4.800" fill="#e9c4b4"/><rect x="13.700" y="15.500" width="3.600" height="4" fill="#e2b9a8"/>
 <path d="M3.500 31.500 c0 -9 5 -11 10 -12.500 l2 2 l2 -2 c5 1.500 10 3.500 10 12.500z" fill="#c4c8e6"/>
</svg>
<div class="t" style="left:961px;top:687px;font-size:12px;color:#f2f2f2">图层 1 拷贝</div>
<div class="t" style="left:961px;top:727px;font-size:12px;color:#f2f2f2">图层 1</div>
<!-- watermark -->
<div class="t" style="left:934px;top:712px;font-family:'Liberation Serif',serif;font-weight:bold;font-size:56px;color:rgba(170,30,40,0.110);letter-spacing:0px">apcodes</div>

</body>
</html>
